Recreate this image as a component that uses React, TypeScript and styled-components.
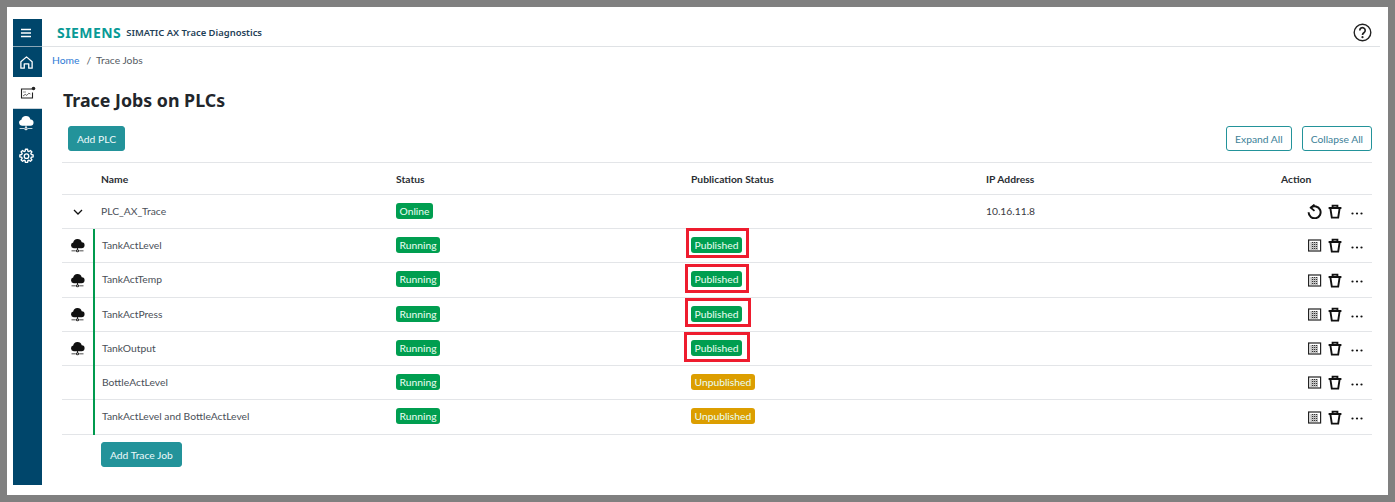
import React from 'react';
import styled, { createGlobalStyle } from 'styled-components';

const GlobalStyle = createGlobalStyle`
  html, body {
    margin: 0;
    padding: 0;
    background: #808080;
  }
  body {
    font-family: Lato, "Noto Sans", sans-serif;
    color: #3a3a42;
  }
`;

const Frame = styled.div`
  box-sizing: border-box;
  width: 1381px;
  height: 488px;
  margin: 7px 0 0 7px;
  padding: 12px 8px 10px 6px;
  background: #fff;
  display: flex;
`;

const Sidebar = styled.nav`
  width: 29px;
  display: flex;
  flex-direction: column;
  flex-shrink: 0;
  background: #00466b;
`;

const NavItem = styled.div<{ $active?: boolean; $height: number }>`
  box-sizing: border-box;
  height: ${(props) => props.$height}px;
  padding-right: ${(props) => (props.$active ? '0' : '3px')};
  display: flex;
  align-items: center;
  justify-content: center;
  color: ${(props) => (props.$active ? '#222' : '#fff')};
  background: ${(props) => (props.$active ? '#fff' : 'transparent')};
  border-bottom: ${(props) => (props.$active ? '1px solid #c9d3da' : 'none')};
`;

const MenuItem = styled(NavItem)`
  border-bottom: 1px solid #8ba6b6;
`;

const Main = styled.main`
  flex: 1;
  min-width: 0;
  display: flex;
  flex-direction: column;
`;

const Header = styled.header`
  box-sizing: border-box;
  height: 28px;
  padding: 0 8px 1px 15px;
  display: flex;
  align-items: center;
  border-bottom: 1px solid #dfe2e5;
`;

const Logo = styled.span`
  font-family: "Noto Sans", sans-serif;
  font-weight: 700;
  font-size: 14px;
  letter-spacing: 0.45px;
  color: #099a96;
`;

const AppName = styled.span`
  margin-left: 5px;
  font-family: "Noto Sans", sans-serif;
  font-size: 9.45px;
  font-weight: 600;
  color: #1f3f57;
`;

const HelpButton = styled.div`
  margin-left: auto;
  color: #222;
  display: flex;
`;

const Breadcrumb = styled.div`
  height: 25px;
  padding-left: 10px;
  display: flex;
  align-items: center;
  font-size: 10.3px;
  color: #555b63;
`;

const Crumb = styled.span`
  color: #2c7bd6;
`;

const Separator = styled.span`
  margin: 0 5px 0 7px;
`;

const Content = styled.div`
  padding: 0 8px 0 20px;
`;

const Title = styled.h1`
  margin: 16px 0 0 1px;
  height: 24px;
  line-height: 24px;
  font-family: "Noto Sans", sans-serif;
  font-size: 17.8px;
  font-weight: 700;
  color: #22262b;
`;

const Toolbar = styled.div`
  margin-top: 14px;
  height: 25px;
  padding-left: 6px;
  display: flex;
  gap: 10px;
`;

const Button = styled.button<{ $outline?: boolean }>`
  box-sizing: border-box;
  height: 25px;
  padding: 0 8px;
  font-family: inherit;
  font-size: 10.3px;
  border-radius: 3px;
  border: 1px solid #23939a;
  color: ${(props) => (props.$outline ? '#3d7f98' : '#eefafa')};
  background: ${(props) => (props.$outline ? '#fff' : '#23939a')};
`;

const Spacer = styled.div`
  flex: 1;
`;

const Table = styled.div`
  margin-top: 11px;
  border-top: 1px solid #e3e5e8;
  width: 1310px;
`;

const Row = styled.div<{ $height: number; $lift?: boolean }>`
  box-sizing: border-box;
  height: ${(props) => props.$height}px;
  padding-bottom: ${(props) => (props.$lift ? '2px' : '0')};
  display: grid;
  grid-template-columns: 31px 8px 295px 295px 295px 277px 109px;
  align-items: center;
  border-bottom: 1px solid #e3e5e8;
  font-size: 10.3px;
`;

const HeadCell = styled.div`
  color: #2a2e33;
  font-weight: 700;
`;

const IconCell = styled.div`
  grid-column: 1;
  display: flex;
  justify-content: center;
  padding-left: 1px;
  color: #111;
`;

const RowIconCell = styled(IconCell)`
  padding-top: 2px;
  padding-left: 0;
`;

const AccentCell = styled.div<{ $on?: boolean }>`
  grid-column: 2;
  align-self: stretch;
  margin-bottom: -3px;
  box-sizing: border-box;
  border-left: ${(props) => (props.$on ? '2px solid #009a4e' : 'none')};
`;

const NameCell = styled.div<{ $job?: boolean }>`
  padding-left: ${(props) => (props.$job ? '1px' : '0')};
  color: #4a4f58;
`;

const StatusCell = styled.div`
  display: flex;
  align-items: center;
`;

const Badge = styled.span<{ $tone: 'green' | 'amber' }>`
  height: 16px;
  line-height: 16px;
  padding: 0 3.5px;
  border-radius: 3px;
  font-size: 10.3px;
  color: #eafff3;
  background: ${(props) => (props.$tone === 'green' ? '#009e50' : '#dc9e00')};
`;

const Highlight = styled.span<{ $top: number; $bottom: number; $left: number; $right: number }>`
  position: relative;
  display: inline-flex;
  &::after {
    content: '';
    position: absolute;
    top: ${(props) => -props.$top}px;
    bottom: ${(props) => -props.$bottom}px;
    left: ${(props) => -props.$left}px;
    right: ${(props) => -props.$right}px;
    border: 3px solid #ee1c2e;
  }
`;

const Actions = styled.div`
  display: flex;
  align-items: center;
  justify-content: flex-end;
  gap: 6px;
  padding: 2px 6px 0 0;
  color: #111;
`;

const ActionHead = styled(HeadCell)`
  padding-left: 18px;
`;

const Footer = styled.div`
  padding: 7px 0 0 39px;
`;

type Glyph = { size?: number };

const MenuIcon = () => (
  <svg width="12" height="12" viewBox="0 0 12 12" fill="none" stroke="currentColor" strokeWidth="1.3">
    <path d="M1 2.5h10M1 6h10M1 9.5h10" />
  </svg>
);

const HomeIcon = () => (
  <svg width="15" height="15" viewBox="0 0 16 16" fill="none" stroke="currentColor" strokeWidth="1.4" strokeLinejoin="round">
    <path d="M2 7.2 8 2l6 5.2V14h-3.6V9.4H5.6V14H2z" />
  </svg>
);

const TraceIcon = () => (
  <svg width="16" height="14" viewBox="0 0 16 14" fill="none" stroke="currentColor">
    <path d="M12 3H1.5v9h11V6.5" strokeWidth="1.1" />
    <path d="M3 10l2.2-1.6 1.6 1 2-2.2 1.6.8" strokeWidth="0.7" />
    <path d="M3 6h3" strokeWidth="0.5" />
    <circle cx="13.5" cy="2.5" r="1.8" fill="currentColor" stroke="none" />
  </svg>
);

const CloudIcon = ({ size = 16 }: Glyph) => (
  <svg width={size} height={size} viewBox="0 0 16 16" fill="currentColor">
    <path d="M4 10.8a3.1 3.1 0 0 1-.6-6.1 4.7 4.7 0 0 1 9.1-.3 3.2 3.2 0 0 1-.3 6.4z" />
    <path d="M7.5 10.4h1v2.2h-1z" />
    <path d="M1.6 13.3h4.6v.8H1.6zM9.8 13.3h4.6v.8H9.8z" />
    <path d="M8 12.1a1.6 1.6 0 1 0 0 3.2 1.6 1.6 0 0 0 0-3.2zm0 1a.6.6 0 1 1 0 1.2.6.6 0 0 1 0-1.2z" />
  </svg>
);

const GearIcon = () => (
  <svg width="15" height="15" viewBox="0 0 24 24" fill="none" stroke="currentColor" strokeWidth="2.2" strokeLinejoin="round">
    <path d="M10.3 2h3.4l.5 2.9 1.7.7 2.4-1.7 2.4 2.4-1.7 2.4.7 1.7 2.9.5v3.4l-2.9.5-.7 1.7 1.7 2.4-2.4 2.4-2.4-1.7-1.7.7-.5 2.9h-3.4l-.5-2.9-1.7-.7-2.4 1.7-2.4-2.4 1.7-2.4-.7-1.7-2.9-.5v-3.4l2.9-.5.7-1.7-1.7-2.4 2.4-2.4 2.4 1.7 1.7-.7z" />
    <circle cx="12" cy="13" r="3.6" />
  </svg>
);

const HelpIcon = () => (
  <svg width="19" height="19" viewBox="0 0 19 19" fill="none" stroke="currentColor">
    <circle cx="9.5" cy="9.5" r="8.3" strokeWidth="1.4" />
    <path d="M6.8 7.4a2.7 2.7 0 1 1 4.3 2.1c-1 .7-1.6 1.2-1.6 2.6" strokeWidth="1.7" />
    <circle cx="9.5" cy="14.2" r="1.1" fill="currentColor" stroke="none" />
  </svg>
);

const ChevronIcon = () => (
  <svg width="12" height="12" viewBox="0 0 12 12" fill="none" stroke="currentColor" strokeWidth="1.3">
    <path d="M2 4l4 4 4-4" />
  </svg>
);

const ResetIcon = () => (
  <svg width="15" height="15" viewBox="0 0 16 16" fill="none" stroke="currentColor" strokeWidth="2.1">
    <path d="M4.2 3.8A6.4 6.4 0 1 1 1.7 8.9" />
    <path d="M8 .6 4 4l4 3.4" strokeWidth="1.9" />
  </svg>
);

const TrashIcon = () => (
  <svg width="14" height="15" viewBox="0 0 14 15" fill="none" stroke="currentColor" strokeWidth="1.9">
    <path d="M.6 4h12.8M4.6 3.8V1.6h4.8v2.2M2.4 4.4l1.4 9.2h6.4l1.4-9.2" />
  </svg>
);

const MoreIcon = () => (
  <svg width="18" height="14" viewBox="0 0 18 14" fill="currentColor">
    <circle cx="4.5" cy="8.5" r="1.1" />
    <circle cx="9" cy="8.5" r="1.1" />
    <circle cx="13.5" cy="8.5" r="1.1" />
  </svg>
);

const GridIcon = () => (
  <svg width="14" height="13" viewBox="0 0 14 13" fill="none" stroke="#222">
    <rect x="0.6" y="1" width="12" height="11" strokeWidth="1.2" />
    <path d="M2.6 4h8M2.6 6h8M2.6 8h8M2.6 10h8M4.6 3v8M6.6 3v8M8.6 3v8" strokeWidth="1" strokeDasharray="1 1" />
  </svg>
);

// the red marks in the picture are hand drawn, so each one sits a little differently
const jobs = [
  { name: 'TankActLevel', height: 34, mark: { top: 9, bottom: 5, left: 5, right: 7 } },
  { name: 'TankActTemp', height: 35, mark: { top: 7, bottom: 6, left: 6, right: 7 } },
  { name: 'TankActPress', height: 34, mark: { top: 8, bottom: 5, left: 6, right: 9 } },
  { name: 'TankOutput', height: 34, mark: { top: 8, bottom: 6, left: 7, right: 8 } },
  { name: 'BottleActLevel', height: 34 },
  { name: 'TankActLevel and BottleActLevel', height: 35 },
];

function App() {
  return (
    <>
      <GlobalStyle />
      <Frame>
        <Sidebar>
          <MenuItem $height={28}><MenuIcon /></MenuItem>
          <NavItem $height={30}><HomeIcon /></NavItem>
          <NavItem $height={32} $active><TraceIcon /></NavItem>
          <NavItem $height={28}><CloudIcon size={16} /></NavItem>
          <NavItem $height={36}><GearIcon /></NavItem>
        </Sidebar>
        <Main>
          <Header>
            <Logo>SIEMENS</Logo>
            <AppName>SIMATIC AX Trace Diagnostics</AppName>
            <HelpButton><HelpIcon /></HelpButton>
          </Header>
          <Breadcrumb>
            <Crumb>Home</Crumb>
            <Separator>/</Separator>
            <span>Trace Jobs</span>
          </Breadcrumb>
          <Content>
            <Title>Trace Jobs on PLCs</Title>
            <Toolbar>
              <Button>Add PLC</Button>
              <Spacer />
              <Button $outline>Expand All</Button>
              <Button $outline>Collapse All</Button>
            </Toolbar>
            <Table>
              <Row $height={32}>
                <IconCell />
                <AccentCell />
                <HeadCell>Name</HeadCell>
                <HeadCell>Status</HeadCell>
                <HeadCell>Publication Status</HeadCell>
                <HeadCell>IP Address</HeadCell>
                <ActionHead>Action</ActionHead>
              </Row>
              <Row $height={34} $lift>
                <RowIconCell><ChevronIcon /></RowIconCell>
                <AccentCell />
                <NameCell>PLC_AX_Trace</NameCell>
                <StatusCell><Badge $tone="green">Online</Badge></StatusCell>
                <StatusCell />
                <div>10.16.11.8</div>
                <Actions>
                  <ResetIcon />
                  <TrashIcon />
                  <MoreIcon />
                </Actions>
              </Row>
              {jobs.map((job) => (
                <Row key={job.name} $height={job.height} $lift>
                  <RowIconCell>{job.mark && <CloudIcon size={15} />}</RowIconCell>
                  <AccentCell $on />
                  <NameCell $job>{job.name}</NameCell>
                  <StatusCell><Badge $tone="green">Running</Badge></StatusCell>
                  <StatusCell>
                    {job.mark ? (
                      <Highlight
                        $top={job.mark.top}
                        $bottom={job.mark.bottom}
                        $left={job.mark.left}
                        $right={job.mark.right}
                      >
                        <Badge $tone="green">Published</Badge>
                      </Highlight>
                    ) : (
                      <Badge $tone="amber">Unpublished</Badge>
                    )}
                  </StatusCell>
                  <div />
                  <Actions>
                    <GridIcon />
                    <TrashIcon />
                    <MoreIcon />
                  </Actions>
                </Row>
              ))}
            </Table>
            <Footer>
              <Button>Add Trace Job</Button>
            </Footer>
          </Content>
        </Main>
      </Frame>
    </>
  );
}

export default App;
